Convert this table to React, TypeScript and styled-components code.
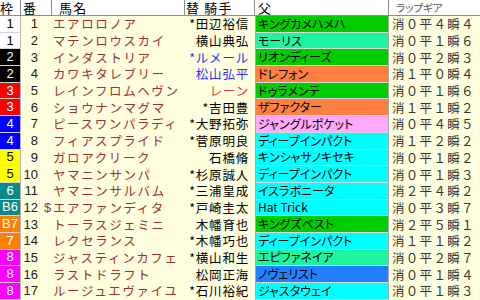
import styled, { createGlobalStyle } from "styled-components";

const GlobalStyle = createGlobalStyle`
  html, body {
    margin: 0;
    padding: 0;
    background: #ffffe0;
  }
  body {
    font-family: "Noto Sans CJK JP", "Noto Sans", sans-serif;
  }
`;

const FRAME_COLORS: Record<number, { bg: string; fg: string }> = {
  1: { bg: "#ffffff", fg: "#000000" },
  2: { bg: "#000000", fg: "#ffffff" },
  3: { bg: "#ff0000", fg: "#ffffff" },
  4: { bg: "#0000ff", fg: "#ffffff" },
  5: { bg: "#ffff00", fg: "#000000" },
  6: { bg: "#0b8a8a", fg: "#ffffff" },
  7: { bg: "#ff8000", fg: "#ffffff" },
  8: { bg: "#ff00ff", fg: "#ffffff" },
};

const SIRE = {
  green: "#00cc00",
  mint: "#1ef5a0",
  orange: "#ff8040",
  pink: "#ffaaff",
  cyan: "#00ffff",
  blue: "#2080ff",
};

type Horse = {
  frame: number;
  frameLabel: string;
  no: number;
  mark?: string;
  name: string;
  jockey: string;
  jockeyColor?: string;
  sire: string;
  sireColor: string;
  gear: string;
};

const horses: Horse[] = [
  { frame: 1, frameLabel: "1", no: 1, name: "エアロロノア", jockey: "*田辺裕信", sire: "キングカメハメハ", sireColor: SIRE.green, gear: "消０平４瞬４" },
  { frame: 1, frameLabel: "1", no: 2, name: "マテンロウスカイ", jockey: "横山典弘", sire: "モーリス", sireColor: SIRE.mint, gear: "消０平１瞬６" },
  { frame: 2, frameLabel: "2", no: 3, name: "インダストリア", jockey: "*ルメール", jockeyColor: "#2a2aff", sire: "リオンディーズ", sireColor: SIRE.green, gear: "消０平２瞬３" },
  { frame: 2, frameLabel: "2", no: 4, name: "カワキタレブリー", jockey: "松山弘平", jockeyColor: "#2a2aff", sire: "ドレフォン", sireColor: SIRE.orange, gear: "消１平０瞬４" },
  { frame: 3, frameLabel: "3", no: 5, name: "レインフロムヘヴン", jockey: "レーン", jockeyColor: "#f03030", sire: "ドゥラメンテ", sireColor: SIRE.green, gear: "消０平１瞬６" },
  { frame: 3, frameLabel: "3", no: 6, name: "ショウナンマグマ", jockey: "*吉田豊", sire: "ザファクター", sireColor: SIRE.orange, gear: "消１平１瞬２" },
  { frame: 4, frameLabel: "4", no: 7, name: "ピースワンパラディ", jockey: "*大野拓弥", sire: "ジャングルポケット", sireColor: SIRE.pink, gear: "消０平４瞬５" },
  { frame: 4, frameLabel: "4", no: 8, name: "フィアスプライド", jockey: "*菅原明良", sire: "ディープインパクト", sireColor: SIRE.cyan, gear: "消１平２瞬２" },
  { frame: 5, frameLabel: "5", no: 9, name: "ガロアクリーク", jockey: "石橋脩", sire: "キンシャサノキセキ", sireColor: SIRE.cyan, gear: "消０平１瞬２" },
  { frame: 5, frameLabel: "5", no: 10, name: "ヤマニンサンパ", jockey: "*杉原誠人", sire: "ディープインパクト", sireColor: SIRE.cyan, gear: "消０平１瞬３" },
  { frame: 6, frameLabel: "6", no: 11, name: "ヤマニンサルバム", jockey: "*三浦皇成", sire: "イスラボニータ", sireColor: SIRE.cyan, gear: "消２平４瞬２" },
  { frame: 6, frameLabel: "B6", no: 12, mark: "$", name: "エアファンディタ", jockey: "*戸崎圭太", sire: "Hat Trick", sireColor: SIRE.cyan, gear: "消０平３瞬７" },
  { frame: 7, frameLabel: "B7", no: 13, name: "トーラスジェミニ", jockey: "木幡育也", sire: "キングズベスト", sireColor: SIRE.green, gear: "消２平５瞬１" },
  { frame: 7, frameLabel: "7", no: 14, name: "レクセランス", jockey: "*木幡巧也", sire: "ディープインパクト", sireColor: SIRE.cyan, gear: "消１平１瞬２" },
  { frame: 8, frameLabel: "8", no: 15, name: "ジャスティンカフェ", jockey: "*横山和生", sire: "エピファネイア", sireColor: SIRE.mint, gear: "消０平２瞬７" },
  { frame: 8, frameLabel: "8", no: 16, name: "ラストドラフト", jockey: "松岡正海", sire: "ノヴェリスト", sireColor: SIRE.blue, gear: "消０平１瞬４" },
  { frame: 8, frameLabel: "8", no: 17, name: "ルージュエヴァイユ", jockey: "*石川裕紀", sire: "ジャスタウェイ", sireColor: SIRE.cyan, gear: "消０平１瞬３" },
];

const StyledTable = styled.div`
  width: 480px;
  height: 300px;
  overflow: hidden;
  background: #ffffe0;
  display: flex;
  flex-direction: column;
`;

const StyledHeader = styled.div`
  display: grid;
  grid-template-columns: 21px 31px 133px 70px 134px 91px;
  height: 16px;
  flex-shrink: 0;
  background: #ffffff;
  border-bottom: 1px solid #8c8c8c;
  box-sizing: border-box;
`;

const StyledHeadCell = styled.div<{ $small?: boolean; $pad?: number }>`
  display: flex;
  align-items: center;
  padding-left: ${(p) => p.$pad ?? 0}px;
  border-right: 1px solid #8c8c8c;
  font-size: ${(p) => (p.$small ? 10.5 : 13)}px;
  color: ${(p) => (p.$small ? "#555555" : "#000000")};
  line-height: 14px;
  white-space: nowrap;
  letter-spacing: ${(p) => (p.$small ? 0 : 1.2)}px;
  font-feature-settings: "palt";
  &:last-child {
    border-right: none;
  }
`;

const StyledRow = styled.div`
  display: grid;
  grid-template-columns: 21px 20px 144px 70px 134px 91px;
  height: 16.7px;
  flex-shrink: 0;
  font-size: 12.5px;
  line-height: 14px;
`;

const StyledFrame = styled.div<{ $bg: string; $fg: string }>`
  display: flex;
  align-items: center;
  justify-content: center;
  background: ${(p) => p.$bg};
  color: ${(p) => p.$fg};
  border-right: 1px solid #b4b4b4;
  border-bottom: 1px solid #d4d4d4;
  box-sizing: border-box;
  font-family: "Liberation Sans", "Noto Sans", sans-serif;
  font-size: 13px;
`;

const StyledNo = styled.div`
  display: flex;
  align-items: center;
  justify-content: flex-end;
  padding-right: 3px;
  font-family: "Liberation Sans", "Noto Sans", sans-serif;
  font-size: 13px;
  color: #222222;
`;

const StyledName = styled.div`
  display: flex;
  align-items: center;
  padding-left: 3px;
  color: #9c2f2f;
  letter-spacing: 1.6px;
  white-space: nowrap;
  overflow: hidden;
`;

const StyledMark = styled.span`
  display: inline-block;
  width: 9px;
  flex-shrink: 0;
  letter-spacing: 0;
  font-family: "Liberation Sans", sans-serif;
  font-size: 13px;
`;

const StyledJockey = styled.div<{ $color?: string }>`
  display: flex;
  align-items: center;
  justify-content: flex-end;
  padding-right: 6px;
  color: ${(p) => p.$color ?? "#000000"};
  letter-spacing: 0.8px;
  white-space: nowrap;
`;

const StyledSire = styled.div<{ $bg: string }>`
  display: flex;
  align-items: center;
  padding-left: 2px;
  background: ${(p) => p.$bg};
  border-left: 1px solid #a8a8a8;
  border-right: 1px solid #a8a8a8;
  border-bottom: 1px solid #d8d8d8;
  box-sizing: border-box;
  font-size: 12px;
  font-feature-settings: "palt";
  white-space: nowrap;
  overflow: hidden;
  color: #000000;
`;

const StyledGear = styled.div`
  display: flex;
  align-items: center;
  padding-left: 3px;
  color: #333333;
  letter-spacing: 1.3px;
  white-space: nowrap;
`;

export default function App() {
  return (
    <>
      <GlobalStyle />
      <StyledTable>
        <StyledHeader>
          <StyledHeadCell>枠</StyledHeadCell>
          <StyledHeadCell $pad={2}>番</StyledHeadCell>
          <StyledHeadCell $pad={7}>馬名</StyledHeadCell>
          <StyledHeadCell $pad={1}>替 騎手</StyledHeadCell>
          <StyledHeadCell $pad={3}>父</StyledHeadCell>
          <StyledHeadCell $small $pad={7}>ラップギア</StyledHeadCell>
        </StyledHeader>
        {horses.map((h) => {
          const fc = FRAME_COLORS[h.frame];
          return (
            <StyledRow key={h.no}>
              <StyledFrame $bg={fc.bg} $fg={fc.fg}>
                {h.frameLabel}
              </StyledFrame>
              <StyledNo>{h.no}</StyledNo>
              <StyledName>
                <StyledMark>{h.mark ?? ""}</StyledMark>
                {h.name}
              </StyledName>
              <StyledJockey $color={h.jockeyColor}>{h.jockey}</StyledJockey>
              <StyledSire $bg={h.sireColor}>{h.sire}</StyledSire>
              <StyledGear>{h.gear}</StyledGear>
            </StyledRow>
          );
        })}
      </StyledTable>
    </>
  );
}
